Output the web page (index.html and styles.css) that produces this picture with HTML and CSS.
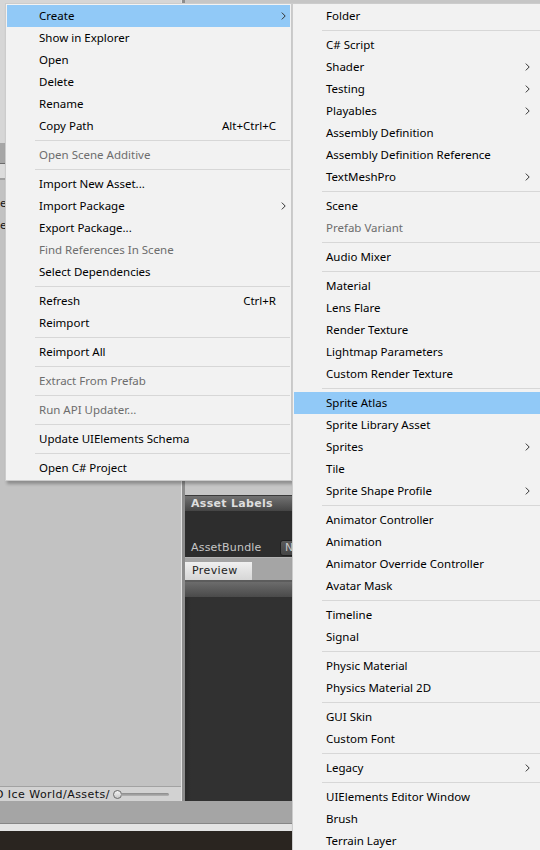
FILE: index.html
```html
<!DOCTYPE html>
<html>
<head>
<meta charset="utf-8">
<link rel="stylesheet" href="styles.css">
</head>
<body>
<div class="editor">
  <div class="workspace">
    <div class="project">
      <div class="proj-top"></div>
      <div class="proj-bar"></div>
      <div class="proj-row"></div>
      <div class="proj-list">
        <div class="proj-item">e</div>
        <div class="proj-item">e</div>
      </div>
      <div class="status">
        <span class="path">D Ice World/Assets/</span>
        <span class="slider"><span class="knob"></span><span class="track"></span></span>
      </div>
    </div>
    <div class="divider"></div>
    <div class="inspector">
      <div class="insp-top"></div>
      <div class="section-head">Asset Labels</div>
      <div class="labels-body">
        <span class="field-label">AssetBundle</span>
        <span class="dropdown">None</span>
      </div>
      <div class="tabbar"><span class="tab">Preview</span></div>
      <div class="preview-head"></div>
      <div class="preview-body"></div>
    </div>
  </div>
  <div class="bottom-bar"></div>
  <div class="light-strip"></div>
  <div class="dark-bottom"></div>
</div>

<div class="menu main">
  <div class="item hl"><span class="label">Create</span><span class="key"></span><span class="arrow"><svg width="5" height="8" viewBox="0 0 5 8"><path d="M0.8 0.6 L4.2 4 L0.8 7.4" fill="none" stroke="#333" stroke-width="1"/></svg></span></div>
  <div class="item"><span class="label">Show in Explorer</span></div>
  <div class="item"><span class="label">Open</span></div>
  <div class="item"><span class="label">Delete</span></div>
  <div class="item"><span class="label">Rename</span></div>
  <div class="item"><span class="label">Copy Path</span><span class="key">Alt+Ctrl+C</span><span class="arrow"></span></div>
  <div class="sep"></div>
  <div class="item dis"><span class="label">Open Scene Additive</span></div>
  <div class="sep"></div>
  <div class="item"><span class="label">Import New Asset...</span></div>
  <div class="item"><span class="label">Import Package</span><span class="key"></span><span class="arrow"><svg width="5" height="8" viewBox="0 0 5 8"><path d="M0.8 0.6 L4.2 4 L0.8 7.4" fill="none" stroke="#333" stroke-width="1"/></svg></span></div>
  <div class="item"><span class="label">Export Package...</span></div>
  <div class="item dis"><span class="label">Find References In Scene</span></div>
  <div class="item"><span class="label">Select Dependencies</span></div>
  <div class="sep"></div>
  <div class="item"><span class="label">Refresh</span><span class="key">Ctrl+R</span><span class="arrow"></span></div>
  <div class="item"><span class="label">Reimport</span></div>
  <div class="sep"></div>
  <div class="item"><span class="label">Reimport All</span></div>
  <div class="sep"></div>
  <div class="item dis"><span class="label">Extract From Prefab</span></div>
  <div class="sep"></div>
  <div class="item dis"><span class="label">Run API Updater...</span></div>
  <div class="sep"></div>
  <div class="item"><span class="label">Update UIElements Schema</span></div>
  <div class="sep"></div>
  <div class="item"><span class="label">Open C# Project</span></div>
</div>

<div class="menu sub">
  <div class="item"><span class="label">Folder</span></div>
  <div class="sep"></div>
  <div class="item"><span class="label">C# Script</span></div>
  <div class="item"><span class="label">Shader</span><span class="key"></span><span class="arrow"><svg width="5" height="8" viewBox="0 0 5 8"><path d="M0.8 0.6 L4.2 4 L0.8 7.4" fill="none" stroke="#333" stroke-width="1"/></svg></span></div>
  <div class="item"><span class="label">Testing</span><span class="key"></span><span class="arrow"><svg width="5" height="8" viewBox="0 0 5 8"><path d="M0.8 0.6 L4.2 4 L0.8 7.4" fill="none" stroke="#333" stroke-width="1"/></svg></span></div>
  <div class="item"><span class="label">Playables</span><span class="key"></span><span class="arrow"><svg width="5" height="8" viewBox="0 0 5 8"><path d="M0.8 0.6 L4.2 4 L0.8 7.4" fill="none" stroke="#333" stroke-width="1"/></svg></span></div>
  <div class="item"><span class="label">Assembly Definition</span></div>
  <div class="item"><span class="label">Assembly Definition Reference</span></div>
  <div class="item"><span class="label">TextMeshPro</span><span class="key"></span><span class="arrow"><svg width="5" height="8" viewBox="0 0 5 8"><path d="M0.8 0.6 L4.2 4 L0.8 7.4" fill="none" stroke="#333" stroke-width="1"/></svg></span></div>
  <div class="sep"></div>
  <div class="item"><span class="label">Scene</span></div>
  <div class="item dis"><span class="label">Prefab Variant</span></div>
  <div class="sep"></div>
  <div class="item"><span class="label">Audio Mixer</span></div>
  <div class="sep"></div>
  <div class="item"><span class="label">Material</span></div>
  <div class="item"><span class="label">Lens Flare</span></div>
  <div class="item"><span class="label">Render Texture</span></div>
  <div class="item"><span class="label">Lightmap Parameters</span></div>
  <div class="item"><span class="label">Custom Render Texture</span></div>
  <div class="sep"></div>
  <div class="item hl"><span class="label">Sprite Atlas</span></div>
  <div class="item"><span class="label">Sprite Library Asset</span></div>
  <div class="item"><span class="label">Sprites</span><span class="key"></span><span class="arrow"><svg width="5" height="8" viewBox="0 0 5 8"><path d="M0.8 0.6 L4.2 4 L0.8 7.4" fill="none" stroke="#333" stroke-width="1"/></svg></span></div>
  <div class="item"><span class="label">Tile</span></div>
  <div class="item"><span class="label">Sprite Shape Profile</span><span class="key"></span><span class="arrow"><svg width="5" height="8" viewBox="0 0 5 8"><path d="M0.8 0.6 L4.2 4 L0.8 7.4" fill="none" stroke="#333" stroke-width="1"/></svg></span></div>
  <div class="sep"></div>
  <div class="item"><span class="label">Animator Controller</span></div>
  <div class="item"><span class="label">Animation</span></div>
  <div class="item"><span class="label">Animator Override Controller</span></div>
  <div class="item"><span class="label">Avatar Mask</span></div>
  <div class="sep"></div>
  <div class="item"><span class="label">Timeline</span></div>
  <div class="item"><span class="label">Signal</span></div>
  <div class="sep"></div>
  <div class="item"><span class="label">Physic Material</span></div>
  <div class="item"><span class="label">Physics Material 2D</span></div>
  <div class="sep"></div>
  <div class="item"><span class="label">GUI Skin</span></div>
  <div class="item"><span class="label">Custom Font</span></div>
  <div class="sep"></div>
  <div class="item"><span class="label">Legacy</span><span class="key"></span><span class="arrow"><svg width="5" height="8" viewBox="0 0 5 8"><path d="M0.8 0.6 L4.2 4 L0.8 7.4" fill="none" stroke="#333" stroke-width="1"/></svg></span></div>
  <div class="sep"></div>
  <div class="item"><span class="label">UIElements Editor Window</span></div>
  <div class="item"><span class="label">Brush</span></div>
  <div class="item"><span class="label">Terrain Layer</span></div>
</div>
</body>
</html>
```

FILE: styles.css
```css
html, body {
  margin: 0;
  padding: 0;
}
body {
  width: 540px;
  height: 850px;
  overflow: hidden;
  position: relative;
  font-family: "DejaVu Sans", sans-serif;
}

/* ---------- editor underlay ---------- */
.editor {
  width: 540px;
  height: 850px;
  display: flex;
  flex-direction: column;
}
.workspace {
  height: 801px;
  display: flex;
}
.project {
  width: 181px;
  display: flex;
  flex-direction: column;
  background: #c2c2c2;
}
.proj-top {
  height: 143px;
  background: #d6d6d6;
}
.proj-bar {
  height: 20px;
  background: #a6a6a6;
  border-bottom: 1px solid #6c6c6c;
}
.proj-row {
  height: 14px;
  background: #dcdcdc;
  border-bottom: 2px solid #a0a0a0;
}
.proj-list {
  flex: 1;
  background: #c2c2c2;
  padding-top: 13px;
}
.proj-item {
  height: 22px;
  line-height: 22px;
  font-size: 11px;
  color: #111;
}
.status {
  height: 14px;
  border-top: 1px solid #a2a2a2;
  background: #d2d2d2;
  display: flex;
  align-items: center;
  font-size: 11px;
  color: #111;
}
.path {
  margin-left: -5px;
  white-space: nowrap;
  letter-spacing: 0.45px;
}
.slider {
  display: flex;
  align-items: center;
  margin-left: 3px;
}
.knob {
  width: 9px;
  height: 9px;
  border-radius: 50%;
  border: 1px solid #6a6a6a;
  background: linear-gradient(#f4f4f4, #c8c8c8);
  box-sizing: border-box;
}
.track {
  width: 48px;
  height: 3px;
  background: linear-gradient(#8a8a8a, #b4b4b4);
  border-radius: 2px;
  margin-left: -1px;
}
.divider {
  width: 3px;
  background: #8d8d8d;
  border-left: 1px solid #e2e2e2;
}
.inspector {
  flex: 1;
  display: flex;
  flex-direction: column;
  background: #c8c8c8;
}
.insp-top {
  height: 495px;
  background: #c6c6c6;
  border-bottom: 1px solid #3a3a3a;
}
.section-head {
  height: 15px;
  line-height: 15px;
  background: linear-gradient(#727272, #454545);
  color: #dedede;
  font-weight: bold;
  font-size: 11px;
  padding-left: 6px;
  letter-spacing: 0.3px;
}
.labels-body {
  height: 46px;
  background: #2d2d2d;
  display: flex;
  align-items: flex-end;
  padding-left: 6px;
  padding-bottom: 1px;
  box-sizing: border-box;
}
.field-label {
  color: #c6c6c6;
  font-size: 11px;
  width: 89px;
  line-height: 16px;
  letter-spacing: 0.2px;
}
.dropdown {
  height: 14px;
  line-height: 14px;
  padding: 0 4px;
  border: 1px solid #1e1e1e;
  border-radius: 3px;
  background: linear-gradient(#5a5a5a, #454545);
  color: #c8c8c8;
  font-size: 11px;
}
.tabbar {
  height: 25px;
  background: #a5a5a5;
  border-top: 1px solid #b4b4b4;
  border-bottom: 2px solid #5c5c5c;
  display: flex;
  align-items: flex-end;
  box-sizing: border-box;
}
.tab {
  width: 60px;
  height: 18px;
  line-height: 18px;
  padding-left: 7px;
  background: linear-gradient(#f0f0f0, #d6d6d6);
  color: #222;
  font-size: 11px;
  letter-spacing: 0.4px;
}
.preview-head {
  height: 15px;
  background: linear-gradient(#6c6c6c, #4a4a4a);
}
.preview-body {
  flex: 1;
  background: linear-gradient(90deg, #2a2a2a, #313131 6px);
}
.bottom-bar {
  height: 22px;
  background: #a5a5a5;
  border-bottom: 1px solid #868686;
}
.light-strip {
  height: 7px;
  background: #e3e3e3;
}
.dark-bottom {
  flex: 1;
  background: #2a2520;
}

/* ---------- context menus ---------- */
.menu {
  position: absolute;
  top: 3px;
  background: #f2f2f2;
  border: 1px solid #cccccc;
  padding: 1px;
  font-family: "Noto Sans", "Open Sans", sans-serif;
  font-size: 11.5px;
  color: #000;
}
.menu.main {
  left: 5px;
  width: 283px;
  box-shadow: 2px 3px 3px rgba(0, 0, 0, 0.28);
}
.menu.sub {
  left: 292px;
  width: 270px;
  box-shadow: 2px 3px 3px rgba(0, 0, 0, 0.28);
}
.item {
  height: 22px;
  display: flex;
  align-items: center;
  padding-left: 32px;
  padding-bottom: 2px;
  box-sizing: border-box;
  white-space: nowrap;
}
.item.hl {
  background: #91c9f7;
}
.item.dis {
  color: #6d6d6d;
}
.label {
  flex: 1;
}
.key {
  text-align: right;
}
.arrow {
  width: 14px;
  display: flex;
  justify-content: center;
  align-items: center;
  padding-top: 2px;
}
.sub .arrow {
  margin-right: 30px;
}
.sep {
  height: 7px;
  display: flex;
  align-items: center;
  margin-left: 28px;
}
.sep::before {
  content: "";
  flex: 1;
  height: 1px;
  background: #d7d7d7;
}
```
